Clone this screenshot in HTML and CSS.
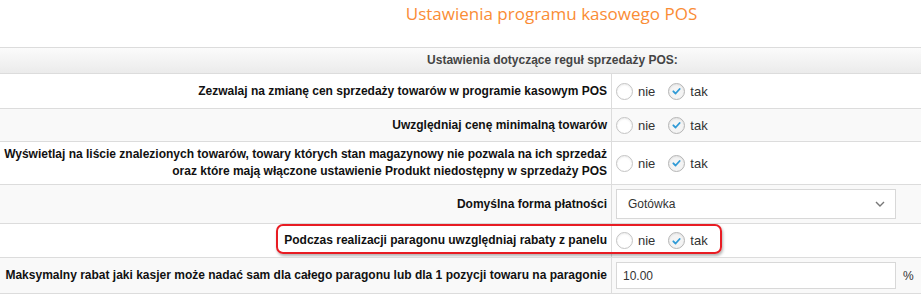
FILE: index.html
```html
<!DOCTYPE html>
<html lang="pl">
<head>
<meta charset="utf-8">
<title>Ustawienia programu kasowego POS</title>
<link rel="stylesheet" href="styles.css">
</head>
<body>
<h1 class="title">Ustawienia programu kasowego POS</h1>
<div class="settings">
  <div class="section-head">Ustawienia dotyczące reguł sprzedaży POS:</div>

  <div class="row r1">
    <div class="label">Zezwalaj na zmianę cen sprzedaży towarów w programie kasowym POS</div>
    <div class="value">
      <label class="opt"><span class="radio"></span>nie</label>
      <label class="opt"><span class="radio checked"><svg viewBox="0 0 18 18" width="18" height="18"><path d="M5.2 9.4 L7.9 12 L12.8 6.6" fill="none" stroke="#2f9ad6" stroke-width="2.2" stroke-linecap="round" stroke-linejoin="round"/></svg></span>tak</label>
    </div>
  </div>

  <div class="row r2 alt">
    <div class="label">Uwzględniaj cenę minimalną towarów</div>
    <div class="value">
      <label class="opt"><span class="radio"></span>nie</label>
      <label class="opt"><span class="radio checked"><svg viewBox="0 0 18 18" width="18" height="18"><path d="M5.2 9.4 L7.9 12 L12.8 6.6" fill="none" stroke="#2f9ad6" stroke-width="2.2" stroke-linecap="round" stroke-linejoin="round"/></svg></span>tak</label>
    </div>
  </div>

  <div class="row r3">
    <div class="label">Wyświetlaj na liście znalezionych towarów, towary których stan magazynowy nie pozwala na ich sprzedaż<br>oraz które mają włączone ustawienie Produkt niedostępny w sprzedaży POS</div>
    <div class="value">
      <label class="opt"><span class="radio"></span>nie</label>
      <label class="opt"><span class="radio checked"><svg viewBox="0 0 18 18" width="18" height="18"><path d="M5.2 9.4 L7.9 12 L12.8 6.6" fill="none" stroke="#2f9ad6" stroke-width="2.2" stroke-linecap="round" stroke-linejoin="round"/></svg></span>tak</label>
    </div>
  </div>

  <div class="row r4 alt">
    <div class="label">Domyślna forma płatności</div>
    <div class="value">
      <div class="select"><span>Gotówka</span><svg class="chev" viewBox="0 0 10 6" width="10" height="6"><path d="M1 1 L5 5 L9 1" fill="none" stroke="#777" stroke-width="1.4"/></svg></div>
    </div>
  </div>

  <div class="row r5">
    <div class="label">Podczas realizacji paragonu uwzględniaj rabaty z panelu</div>
    <div class="value">
      <label class="opt"><span class="radio"></span>nie</label>
      <label class="opt"><span class="radio checked"><svg viewBox="0 0 18 18" width="18" height="18"><path d="M5.2 9.4 L7.9 12 L12.8 6.6" fill="none" stroke="#2f9ad6" stroke-width="2.2" stroke-linecap="round" stroke-linejoin="round"/></svg></span>tak</label>
    </div>
    <div class="highlight"></div>
  </div>

  <div class="row r6 alt">
    <div class="label">Maksymalny rabat jaki kasjer może nadać sam dla całego paragonu lub dla 1 pozycji towaru na paragonie</div>
    <div class="value">
      <div class="input">10.00</div><span class="pct">%</span>
    </div>
  </div>
</div>
</body>
</html>
```

FILE: styles.css
```css
html, body {
  margin: 0;
  padding: 0;
  background: #fff;
}
body {
  font-family: "Liberation Sans", Arial, sans-serif;
  color: #222;
  width: 921px;
  overflow: hidden;
}
.title {
  margin: 0;
  height: 47px;
  box-sizing: border-box;
  padding: 2px 0 0 182px;
  text-align: center;
  font-family: "Open Sans", sans-serif;
  font-weight: 400;
  font-size: 17px;
  line-height: 24px;
  color: #fa8c35;
}
.settings {
  border-bottom: 1px solid #dcdcdc;
}
.section-head {
  height: 25px;
  border-top: 1px solid #dcdcdc;
  background: linear-gradient(#fbfbfb, #ebebeb);
  padding-left: 184px;
  text-align: center;
  font-size: 12px;
  font-weight: bold;
  color: #444;
  line-height: 25px;
}
.row {
  display: flex;
  border-top: 1px solid #dcdcdc;
  background: #fff;
  position: relative;
}
.row.alt {
  background: #f9f9f9;
}
.r1 { height: 34px; }
.r2 { height: 32px; }
.r3 { height: 42px; }
.r4 { height: 38px; }
.r5 { height: 33px; }
.r6 { height: 35px; }
.label {
  width: 612px;
  flex: none;
  box-sizing: border-box;
  border-right: 1px solid #dcdcdc;
  padding: 0 4px 0 0;
  display: flex;
  align-items: center;
  justify-content: flex-end;
  text-align: right;
  white-space: nowrap;
  font-size: 12px;
  font-weight: bold;
  line-height: 17px;
  color: #111;
}
.value {
  flex: 1;
  display: flex;
  align-items: center;
  padding-left: 4px;
  font-size: 13px;
  color: #333;
}
.opt {
  display: flex;
  align-items: center;
  margin-right: 13px;
}
.radio {
  width: 17px;
  height: 17px;
  box-sizing: border-box;
  border: 1px solid #c4c4c4;
  border-radius: 50%;
  background: #fff;
  box-shadow: inset 0 1px 2px rgba(0,0,0,0.08);
  margin-right: 5px;
  display: flex;
  align-items: center;
  justify-content: center;
}
.radio.checked {
  border-color: #b5b5b5;
  background: #f4f4f4;
}
.radio svg {
  display: block;
  width: 16px;
  height: 16px;
}
.select {
  width: 280px;
  height: 30px;
  box-sizing: border-box;
  border: 1px solid #d8d8d8;
  background: #fff;
  display: flex;
  align-items: center;
  justify-content: space-between;
  padding: 0 10px 0 11px;
  font-size: 12px;
  color: #333;
}
.chev {
  display: block;
}
.input {
  width: 280px;
  height: 27px;
  box-sizing: border-box;
  border: 1px solid #d8d8d8;
  background: #fff;
  display: flex;
  align-items: center;
  padding-left: 6px;
  font-size: 12px;
  color: #333;
}
.pct {
  margin-left: 7px;
  font-size: 12px;
  color: #333;
}
.highlight {
  position: absolute;
  left: 276px;
  top: 0;
  width: 446px;
  height: 30px;
  box-sizing: border-box;
  border: 2px solid #e81c23;
  border-radius: 7px;
  box-shadow: 1px 2px 3px rgba(0,0,0,0.3);
  pointer-events: none;
}
```
